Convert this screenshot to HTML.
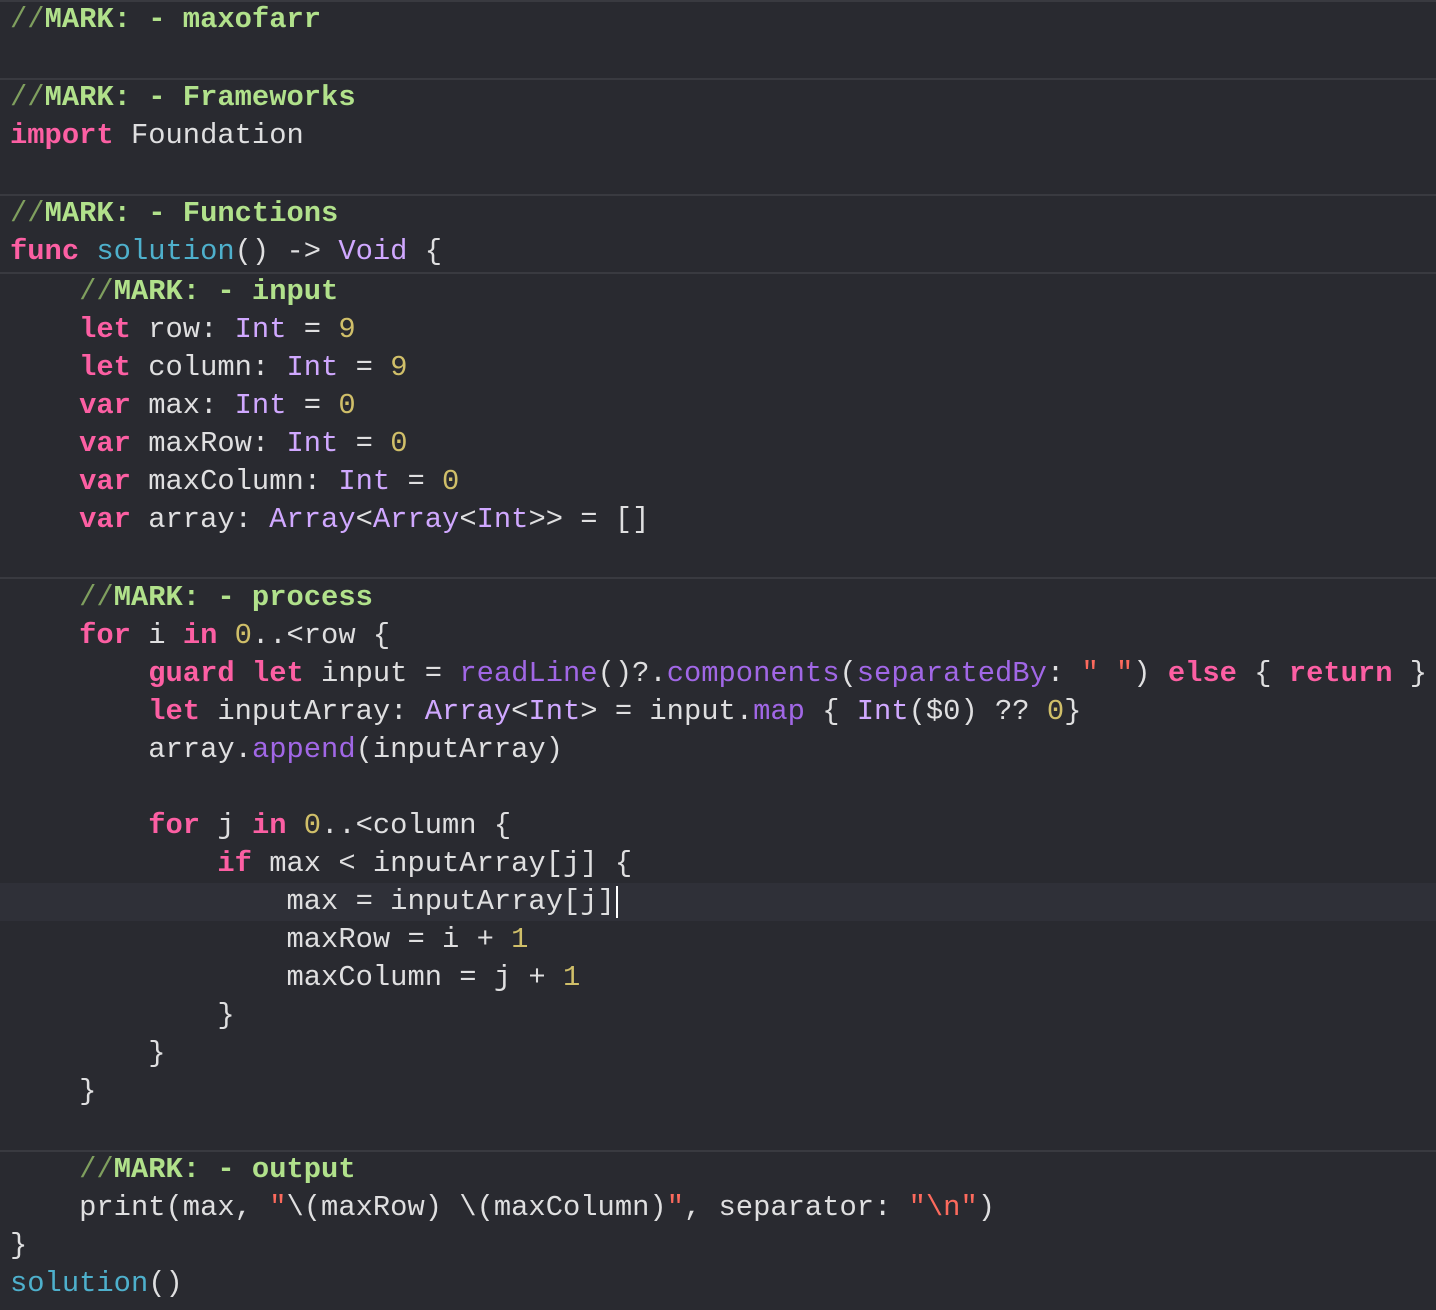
<!DOCTYPE html>
<html><head><meta charset="utf-8"><style>
html,body{margin:0;padding:0;background:#292a30;width:1436px;height:1310px;overflow:hidden}
.l{position:absolute;left:10px;height:38px;line-height:38px;font-family:"Liberation Mono",monospace;font-size:28.8px;color:#dfdfe0;white-space:pre}
.k{color:#fc5fa3;font-weight:bold}
.t{color:#d0a8ff}
.n{color:#d0bf69}
.s{color:#fc6a5d}
.f{color:#4eb0cc}
.m{color:#a167e6}
.c{color:#7f9f5e}
.mk{color:#b1e18b;font-weight:bold}
.sep{position:absolute;left:0;width:1436px;height:2px;background:#393a40}
.hl{position:absolute;left:0;top:883px;width:1436px;height:38px;background:#2f3038}
.cur{position:absolute;left:616px;top:886px;width:2px;height:32px;background:#fff}
</style></head><body>
<div class="sep" style="top:0"></div>
<div class="sep" style="top:78px"></div>
<div class="sep" style="top:194px"></div>
<div class="sep" style="top:272px"></div>
<div class="sep" style="top:577px"></div>
<div class="sep" style="top:1150px"></div>
<div class="hl"></div>
<div class="l" style="top:1px"><span class="c">//</span><span class="mk">MARK: - maxofarr</span></div>
<div class="l" style="top:79px"><span class="c">//</span><span class="mk">MARK: - Frameworks</span></div>
<div class="l" style="top:117px"><span class="k">import</span> Foundation</div>
<div class="l" style="top:195px"><span class="c">//</span><span class="mk">MARK: - Functions</span></div>
<div class="l" style="top:233px"><span class="k">func</span> <span class="f">solution</span>() -&gt; <span class="t">Void</span> {</div>
<div class="l" style="top:273px">    <span class="c">//</span><span class="mk">MARK: - input</span></div>
<div class="l" style="top:311px">    <span class="k">let</span> row: <span class="t">Int</span> = <span class="n">9</span></div>
<div class="l" style="top:349px">    <span class="k">let</span> column: <span class="t">Int</span> = <span class="n">9</span></div>
<div class="l" style="top:387px">    <span class="k">var</span> max: <span class="t">Int</span> = <span class="n">0</span></div>
<div class="l" style="top:425px">    <span class="k">var</span> maxRow: <span class="t">Int</span> = <span class="n">0</span></div>
<div class="l" style="top:463px">    <span class="k">var</span> maxColumn: <span class="t">Int</span> = <span class="n">0</span></div>
<div class="l" style="top:501px">    <span class="k">var</span> array: <span class="t">Array</span>&lt;<span class="t">Array</span>&lt;<span class="t">Int</span>&gt;&gt; = []</div>
<div class="l" style="top:579px">    <span class="c">//</span><span class="mk">MARK: - process</span></div>
<div class="l" style="top:617px">    <span class="k">for</span> i <span class="k">in</span> <span class="n">0</span>..&lt;row {</div>
<div class="l" style="top:655px">        <span class="k">guard</span> <span class="k">let</span> input = <span class="m">readLine</span>()?.<span class="m">components</span>(<span class="m">separatedBy</span>: <span class="s">" "</span>) <span class="k">else</span> { <span class="k">return</span> }</div>
<div class="l" style="top:693px">        <span class="k">let</span> inputArray: <span class="t">Array</span>&lt;<span class="t">Int</span>&gt; = input.<span class="m">map</span> { <span class="t">Int</span>($0) ?? <span class="n">0</span>}</div>
<div class="l" style="top:731px">        array.<span class="m">append</span>(inputArray)</div>
<div class="l" style="top:807px">        <span class="k">for</span> j <span class="k">in</span> <span class="n">0</span>..&lt;column {</div>
<div class="l" style="top:845px">            <span class="k">if</span> max &lt; inputArray[j] {</div>
<div class="l" style="top:883px">                max = inputArray[j]</div>
<div class="l" style="top:921px">                maxRow = i + <span class="n">1</span></div>
<div class="l" style="top:959px">                maxColumn = j + <span class="n">1</span></div>
<div class="l" style="top:997px">            }</div>
<div class="l" style="top:1035px">        }</div>
<div class="l" style="top:1073px">    }</div>
<div class="l" style="top:1151px">    <span class="c">//</span><span class="mk">MARK: - output</span></div>
<div class="l" style="top:1189px">    print(max, <span class="s">"</span>\(maxRow) \(maxColumn)<span class="s">"</span>, separator: <span class="s">"\n"</span>)</div>
<div class="l" style="top:1227px">}</div>
<div class="l" style="top:1265px"><span class="f">solution</span>()</div>
<div class="cur"></div>
</body></html>
